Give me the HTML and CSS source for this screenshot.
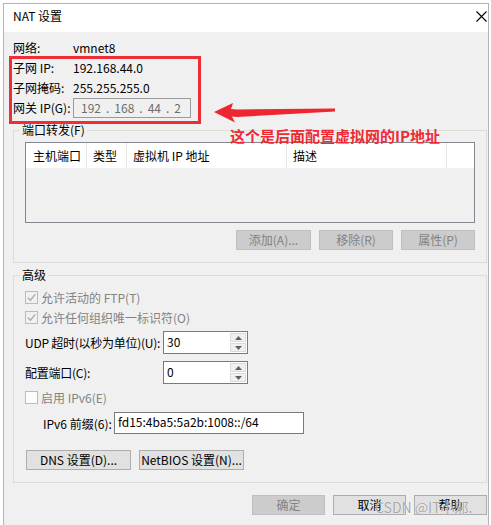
FILE: index.html
```html
<!DOCTYPE html>
<html lang="zh-CN">
<head>
<meta charset="utf-8">
<title>NAT 设置</title>
<link rel="stylesheet" href="styles.css">
</head>
<body>
<div class="window">
  <div class="titlebar">
    <span class="title">NAT 设置</span>
    <svg class="close" width="11" height="11" viewBox="0 0 11 11"><path d="M0.5 0.5 L10.5 10.5 M10.5 0.5 L0.5 10.5" stroke="#000" stroke-width="1.1" fill="none"/></svg>
  </div>
  <div class="content">
    <div class="info">
      <span>网络:</span><span>vmnet8</span>
      <span>子网 IP:</span><span>192.168.44.0</span>
      <span>子网掩码:</span><span>255.255.255.0</span>
      <span>网关 IP(G):</span>
      <div class="ipbox"><span>192</span><span>.</span><span>168</span><span>.</span><span>44</span><span>.</span><span>2</span></div>
    </div>

    <fieldset class="group">
      <legend>端口转发(F)</legend>
      <div class="listview">
        <div class="lv-header">
          <span class="col c1">主机端口</span>
          <span class="col c2">类型</span>
          <span class="col c3">虚拟机 IP 地址</span>
          <span class="col c4">描述</span>
        </div>
      </div>
      <div class="btnrow">
        <button class="btn disabled w75">添加(A)...</button>
        <button class="btn disabled w74">移除(R)</button>
        <button class="btn disabled w74">属性(P)</button>
      </div>
    </fieldset>

    <fieldset class="group adv">
      <legend>高级</legend>
      <div class="check first">
        <span class="cb"><svg width="9" height="9" viewBox="0 0 9 9"><path d="M0.8 4.6 L3.4 7.2 L8.2 1.4" stroke="#a8a8a8" stroke-width="1.3" fill="none"/></svg></span>
        <span class="dis">允许活动的 FTP(T)</span>
      </div>
      <div class="check">
        <span class="cb"><svg width="9" height="9" viewBox="0 0 9 9"><path d="M0.8 4.6 L3.4 7.2 L8.2 1.4" stroke="#a8a8a8" stroke-width="1.3" fill="none"/></svg></span>
        <span class="dis">允许任何组织唯一标识符(O)</span>
      </div>
      <div class="field udp">
        <span class="flabel">UDP 超时(以秒为单位)(U):</span>
        <div class="spin">
          <span class="spin-val">30</span>
          <span class="spin-btns">
            <span class="sb"><svg width="7" height="4" viewBox="0 0 7 4"><path d="M0 4 L3.5 0 L7 4 Z" fill="#606060"/></svg></span>
            <span class="sb"><svg width="7" height="4" viewBox="0 0 7 4"><path d="M0 0 L3.5 4 L7 0 Z" fill="#606060"/></svg></span>
          </span>
        </div>
      </div>
      <div class="field port">
        <span class="flabel">配置端口(C):</span>
        <div class="spin">
          <span class="spin-val">0</span>
          <span class="spin-btns">
            <span class="sb"><svg width="7" height="4" viewBox="0 0 7 4"><path d="M0 4 L3.5 0 L7 4 Z" fill="#606060"/></svg></span>
            <span class="sb"><svg width="7" height="4" viewBox="0 0 7 4"><path d="M0 0 L3.5 4 L7 0 Z" fill="#606060"/></svg></span>
          </span>
        </div>
      </div>
      <div class="check ipv6">
        <span class="cb empty"></span>
        <span class="dis">启用 IPv6(E)</span>
      </div>
      <div class="field prefix">
        <span class="plabel">IPv6 前缀(6):</span>
        <div class="textbox">fd15:4ba5:5a2b:1008::/64</div>
      </div>
      <div class="btnrow left">
        <button class="btn w105">DNS 设置(D)...</button>
        <button class="btn w105">NetBIOS 设置(N)...</button>
      </div>
    </fieldset>

    <div class="footer">
      <button class="btn disabled w73">确定</button>
      <button class="btn w73">取消</button>
      <button class="btn w73">帮助</button>
    </div>
  </div>

  <div class="annot-rect"></div>
  <svg class="annot-arrow" width="126" height="23" viewBox="0 0 126 23"><polygon points="2,11 21,2 19,8 25,8.5 123,7.5 123,10.5 25,16 20,15.5 23,21.5" fill="#ee2630"/></svg>
  <div class="annot-text">这个是后面配置虚拟网的IP地址</div>
  <div class="watermark">CSDN @IT小邪.</div>
</div>
</body>
</html>
```

FILE: styles.css
```css
* { box-sizing: border-box; }
html, body { margin: 0; padding: 0; }
body {
  background: #fff;
  font-family: "Noto Sans CJK SC", "Noto Sans", sans-serif;
  font-size: 12px;
  color: #000;
  width: 491px;
  height: 525px;
  overflow: hidden;
}
.window {
  position: relative;
  margin: 3px 0 0 3px;
  width: 486px;
  height: 522px;
  border: 1px solid #b4b4b4;
  border-bottom: none;
  background: #f0f0f0;
}
.titlebar {
  height: 28px;
  background: #fff;
  display: flex;
  align-items: center;
  justify-content: space-between;
  padding: 0 1px 4px 9px;
}
.title { line-height: 16px; }
.close { display: block; }
.content { padding-top: 6px; }

.info {
  display: grid;
  grid-template-columns: 60px auto;
  grid-auto-rows: 20px;
  align-items: center;
  padding-left: 9px;
  line-height: 16px;
}
.ipbox {
  width: 118px;
  height: 20px;
  border: 1px solid #9a9a9a;
  background: #f0f0f0;
  color: #6d6d6d;
  display: flex;
  align-items: center;
  gap: 5px;
  padding-left: 7px;
}

.group {
  margin: 5px 1px 0 9px;
  padding: 0 11px 12px 11px;
  border: 1px solid #dcdcdc;
  min-width: 0;
}
.group legend {
  margin-left: -5px;
  padding: 0 2px;
  line-height: 14px;
}
.listview {
  margin-top: 5px;
  height: 81px;
  border: 1px solid #828790;
  background: #f0f0f0;
}
.lv-header {
  display: flex;
  height: 25px;
  background: #fff;
}
.col {
  padding-left: 6px;
  border-right: 1px solid #e5e5e5;
  line-height: 25px;
  white-space: nowrap;
}
.c1 { width: 61px; padding-left: 7px; }
.c2 { width: 40px; }
.c3 { width: 160px; }
.c4 { width: 160px; }

.btnrow {
  display: flex;
  justify-content: flex-end;
  gap: 8px;
  margin-top: 7px;
}
.btnrow.left {
  justify-content: flex-start;
  margin: 16px 0 0 1px;
}
.btn {
  font: inherit;
  height: 20px;
  padding: 0;
  border: 1px solid #adadad;
  background: #e1e1e1;
  color: #000;
  line-height: 18px;
  text-align: center;
  white-space: nowrap;
}
.btn.disabled {
  background: #cccccc;
  border-color: #bfbfbf;
  color: #838383;
}
.w73 { width: 73px; }
.w74 { width: 74px; }
.w75 { width: 75px; }
.w105 { width: 105px; }

.check {
  display: flex;
  align-items: center;
  gap: 3px;
  height: 20px;
}
.check.first { margin-top: 5px; }
.check.ipv6 { margin-top: 3px; }
.cb {
  width: 13px;
  height: 13px;
  border: 1px solid #bcbcbc;
  background: #f0f0f0;
  display: inline-flex;
  align-items: center;
  justify-content: center;
}
.cb.empty { background: #fcfcfc; }
.dis { color: #838383; }

.field {
  display: flex;
  align-items: center;
}
.field.udp { margin-top: 4px; }
.field.port { margin-top: 7px; }
.field.prefix { margin-top: 5px; padding-left: 18px; }
.flabel { width: 138px; white-space: nowrap; letter-spacing: -0.25px; }
.plabel { width: 71px; white-space: nowrap; }
.spin {
  width: 85px;
  height: 23px;
  border: 1px solid #7a7a7a;
  background: #fff;
  display: flex;
}
.spin-val {
  flex: 1;
  padding-left: 3px;
  line-height: 19px;
}
.spin-btns {
  width: 17px;
  display: flex;
  flex-direction: column;
  gap: 1px;
  padding: 1px 1px 1px 0;
}
.sb {
  flex: 1;
  border: 1px solid #dadada;
  background: #f0f0f0;
  display: flex;
  align-items: center;
  justify-content: center;
}
.sb svg { display: block; }
.textbox {
  width: 190px;
  height: 22px;
  border: 1px solid #7a7a7a;
  background: #fff;
  padding-left: 3px;
  line-height: 18px;
}

.footer {
  display: flex;
  justify-content: flex-end;
  gap: 8px;
  margin-top: 12px;
  padding-right: 1px;
}

.annot-rect {
  position: absolute;
  left: 5px;
  top: 52px;
  width: 192px;
  height: 68px;
  border: 3px solid #ee2e34;
}
.annot-arrow {
  position: absolute;
  left: 208px;
  top: 97px;
}
.annot-text {
  position: absolute;
  left: 226px;
  top: 123px;
  font-size: 15px;
  line-height: 18px;
  font-weight: 700;
  color: #ee2a34;
  white-space: nowrap;
}
.watermark {
  position: absolute;
  left: 371px;
  top: 495px;
  font-size: 14px;
  line-height: 16px;
  color: rgba(140, 140, 140, 0.75);
  text-shadow: 0 0 1px #fff;
  white-space: nowrap;
}
```
